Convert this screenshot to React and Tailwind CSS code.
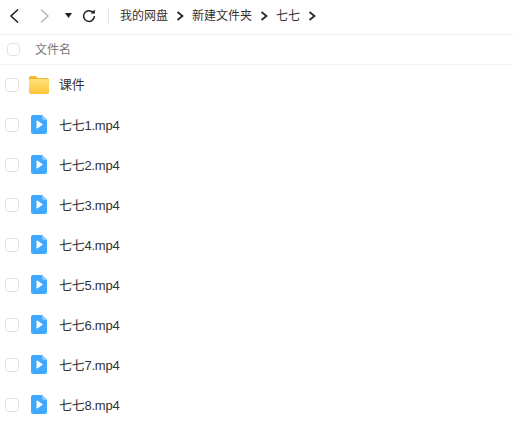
import React from "react";

const videos = ["七七1.mp4", "七七2.mp4", "七七3.mp4", "七七4.mp4", "七七5.mp4", "七七6.mp4", "七七7.mp4", "七七8.mp4"];

function Check({ size }) {
  return <span className={`block ${size} shrink-0 rounded-[4px] border-[1.5px] border-[#e2e2e2] bg-white`}></span>;
}

function FolderIcon() {
  return (
    <svg width="20" height="18" viewBox="0 0 20 18">
      <defs>
        <linearGradient id="fold" x1="0" y1="0" x2="0" y2="1">
          <stop offset="0" stopColor="#ffe27a" />
          <stop offset="1" stopColor="#fdc43a" />
        </linearGradient>
      </defs>
      <path d="M0 2A2 2 0 0 1 2 0h4.5l2.5 2h9a2 2 0 0 1 2 2v1H0z" fill="#f5b82e" />
      <path d="M0 5a2 2 0 0 1 2-2h16a2 2 0 0 1 2 2v11a2 2 0 0 1-2 2H2a2 2 0 0 1-2-2z" fill="url(#fold)" />
    </svg>
  );
}

function VideoIcon() {
  return (
    <svg width="16" height="19" viewBox="0 0 16 19">
      <path d="M2 0h9l5 5v12a2 2 0 0 1-2 2H2a2 2 0 0 1-2-2V2a2 2 0 0 1 2-2z" fill="#3fa9ff" />
      <path d="M11 0l5 5h-3a2 2 0 0 1-2-2z" fill="#8accff" />
      <path d="M5.5 6a.5.5 0 0 1 .8-.4l5 3.5a.5.5 0 0 1 0 .8l-5 3.5a.5.5 0 0 1-.8-.4z" fill="#fff" />
    </svg>
  );
}

function Row({ icon, name, pad, textPad }) {
  return (
    <div className="flex items-center h-10">
      <div className="ml-[5px] w-[24px]"><Check size="w-[14px] h-[14px]" /></div>
      <div className={`w-[30px] flex ${pad}`}>{icon}</div>
      <span className={`text-[13px] text-[#333] tracking-[-0.25px] ${textPad}`}>{name}</span>
    </div>
  );
}

function Crumb({ children }) {
  return (
    <>
      <span>{children}</span>
      <svg width="8" height="10" viewBox="0 0 8 10" className="mx-[8px]">
        <path d="M1.5 1l5 4-5 4" fill="none" stroke="#222" strokeWidth="1.7" />
      </svg>
    </>
  );
}

export default function App() {
  return (
    <div className="w-[514px] h-[432px] overflow-hidden bg-white font-['Liberation_Sans','Noto_Sans_CJK_SC',sans-serif]">
      <div className="flex items-center h-[35px] pb-[3px] border-b border-[#f0f0f0]">
        <svg width="10" height="16" viewBox="0 0 10 16" className="ml-[9px]">
          <path d="M9 1.5L2 8l7 6.5" fill="none" stroke="#222" strokeWidth="1.6" />
        </svg>
        <svg width="10" height="16" viewBox="0 0 10 16" className="ml-[21px]">
          <path d="M1 1.5L8 8l-7 6.5" fill="none" stroke="#b4b4b4" strokeWidth="1.4" />
        </svg>
        <svg width="7" height="5" viewBox="0 0 7 5" className="ml-[15px]">
          <path d="M0 0h7L3.5 5z" fill="#222" />
        </svg>
        <svg width="14" height="14" viewBox="0 0 14 14" className="ml-[10px]">
          <path d="M11.6 4.2A5.4 5.4 0 1 0 12.4 7" fill="none" stroke="#222" strokeWidth="1.5" />
          <path d="M8.5 4.6h4.4V.6z" fill="#222" />
        </svg>
        <span className="ml-[12px] w-px h-[16px] bg-[#e4e4e4]"></span>
        <div className="ml-[11px] flex items-center text-[12px] text-[#333]">
          <Crumb>我的网盘</Crumb>
          <Crumb>新建文件夹</Crumb>
          <Crumb>七七</Crumb>
        </div>
      </div>
      <div className="flex items-center h-[30px] border-b border-[#f3f3f3]">
        <div className="ml-[7px] w-[28px]"><Check size="w-[13px] h-[13px]" /></div>
        <span className="text-[12px] text-[#777]">文件名</span>
      </div>
      <Row icon={<FolderIcon />} name="课件" pad="pl-0" textPad="" />
      {videos.map((v) => (
        <Row key={v} icon={<VideoIcon />} name={v} pad="pl-[2px] pb-[1px]" textPad="pt-[2px]" />
      ))}
    </div>
  );
}
